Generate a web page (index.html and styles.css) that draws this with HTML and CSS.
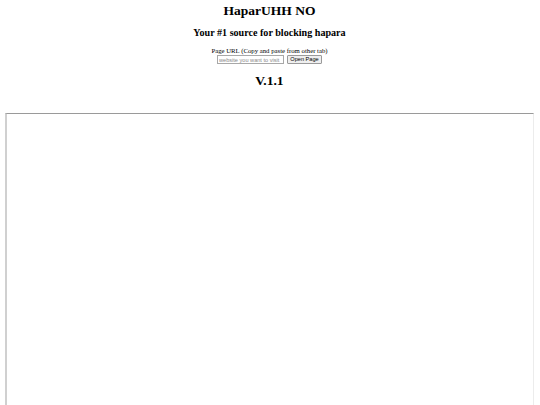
FILE: index.html
```html
<!DOCTYPE html>
<html>
<head>
<meta charset="utf-8">
<title>HaparUHH NO</title>
<link rel="stylesheet" href="styles.css">
</head>
<body>
<div class="center">
  <h1 class="title">HaparUHH NO</h1>
  <h2 class="subtitle">Your #1 source for blocking hapara</h2>
  <div class="label">Page URL (Copy and paste from other tab)</div>
  <div class="form">
    <input class="url" type="text" placeholder="website you want to visit">
    <button class="open">Open Page</button>
  </div>
  <h1 class="version">V.1.1</h1>
</div>
<div class="frame"></div>
</body>
</html>
```
FILE: styles.css
```css
html, body {
  margin: 0;
  padding: 0;
  background: #fff;
}
body {
  padding: 3px 6px 0 5px;
  font-family: "Liberation Serif", "Times New Roman", serif;
  color: #000;
  overflow: hidden;
}
.center {
  text-align: center;
}
.title {
  font-size: 13.5px;
  font-weight: bold;
  margin: 0;
  line-height: 16px;
}
.subtitle {
  font-size: 10.1px;
  font-weight: bold;
  margin: 8px 0 0;
  line-height: 12px;
}
.label {
  font-size: 6.75px;
  line-height: 8px;
  margin-top: 8px;
}
.form {
  display: flex;
  justify-content: center;
  align-items: center;
  gap: 3px;
  height: 9px;
}
.url {
  box-sizing: border-box;
  width: 67px;
  height: 9px;
  padding: 0 1px;
  margin: 0;
  border: 1px solid #a8a8a8;
  font-family: "Liberation Sans", Arial, sans-serif;
  font-size: 5.6px;
  color: #000;
  outline: none;
}
.url::placeholder {
  color: #8a8a8a;
}
.open {
  box-sizing: border-box;
  width: 35px;
  height: 9px;
  padding: 0;
  margin: 0;
  border: 1px solid #9a9a9a;
  border-radius: 1px;
  background: #efefef;
  font-family: "Liberation Sans", Arial, sans-serif;
  font-size: 5.6px;
  line-height: 7px;
  color: #000;
}
.version {
  font-size: 13.5px;
  font-weight: bold;
  margin: 9px 0 0;
  line-height: 16px;
}
.frame {
  margin-top: 24px;
  height: 400px;
  border-top: 1px solid #9a9a9a;
  border-left: 2px solid #d0d0d0;
  border-right: 1px solid #ececec;
}
```
